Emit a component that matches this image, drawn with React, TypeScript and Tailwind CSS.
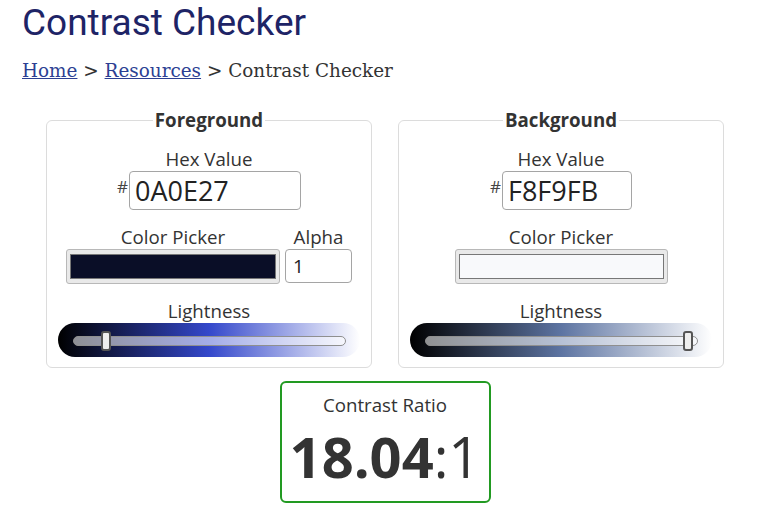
import React from "react";

const label = "text-[18.7px] leading-[24px] text-[#333]";

function Slider({ gradient, thumbLeft }: { gradient: string; thumbLeft: string }) {
  return (
    <div className={`relative w-[302px] h-[34px] rounded-full ${gradient}`}>
      <div className="absolute left-[15px] right-[14px] top-[13px] h-[10px] rounded-full bg-white/55 border border-[#8f8f8f]" />
      <div className={`absolute top-[8px] ${thumbLeft} w-[10px] h-[20px] rounded-[3px] bg-[#eeeeee] border-2 border-[#555]`} />
    </div>
  );
}

function HexInput({ value, width }: { value: string; width: string }) {
  return (
    <div className="flex items-start">
      <span className="text-[17px] leading-none mt-[7px] mr-[1px] text-[#444]">#</span>
      <div className={`${width} h-[39px] border border-[#a5a5a5] rounded-[4px] pl-[5px] text-[27px] leading-[37px] text-[#222]`}>
        {value}
      </div>
    </div>
  );
}

function Picker({ color, width }: { color: string; width: string }) {
  return (
    <div className={`${width} h-[35px] rounded-[3px] border border-[#b8b8b8] bg-[#e9e9e9] px-[3px] py-[4px]`}>
      <div className={`h-full border border-[#777] ${color}`} />
    </div>
  );
}

export default function App() {
  return (
    <div className="min-h-[516px] bg-white pl-[22px] font-['Open_Sans',sans-serif]">
      <h1 className="font-['Roboto',sans-serif] text-[37px] leading-[46px] text-[#1e2466]">Contrast Checker</h1>
      <nav className="mt-[13px] font-['DejaVu_Serif',serif] text-[18.4px] leading-[24px] text-[#333]">
        <a className="text-[#2c3f93] underline">Home</a> &gt;{" "}
        <a className="text-[#2c3f93] underline">Resources</a> &gt; Contrast Checker
      </nav>

      <div className="w-[678px] ml-[24px] mt-[25px]">
        <div className="flex gap-[26px]">
          <fieldset className="w-[326px] border border-[#dcdcdc] rounded-[6px] pb-[10px]">
            <legend className="mx-auto px-[2px] text-[18.7px] font-bold leading-[24px] text-[#333]">Foreground</legend>
            <div className="flex flex-col items-center pt-[15px]">
              <span className={label}>Hex Value</span>
              <HexInput value="0A0E27" width="w-[172px]" />
              <div className="flex gap-[5px] mt-[15px]">
                <div className="flex flex-col items-center">
                  <span className={label}>Color Picker</span>
                  <Picker color="bg-[#0a0e27]" width="w-[214px]" />
                </div>
                <div className="flex flex-col items-center">
                  <span className={label}>Alpha</span>
                  <div className="w-[67px] h-[34px] border border-[#a5a5a5] rounded-[4px] pl-[7px] text-[19px] leading-[32px] text-[#222]">1</div>
                </div>
              </div>
              <span className={`${label} mt-[15px]`}>Lightness</span>
              <Slider gradient="bg-[linear-gradient(to_right,#000,#3448cb,#fff)]" thumbLeft="left-[43px]" />
            </div>
          </fieldset>

          <fieldset className="w-[326px] border border-[#dcdcdc] rounded-[6px] pb-[10px]">
            <legend className="mx-auto px-[2px] text-[18.7px] font-bold leading-[24px] text-[#333]">Background</legend>
            <div className="flex flex-col items-center pt-[15px]">
              <span className={label}>Hex Value</span>
              <HexInput value="F8F9FB" width="w-[130px]" />
              <div className="flex flex-col items-center mt-[15px]">
                <span className={label}>Color Picker</span>
                <Picker color="bg-[#f8f9fb]" width="w-[213px]" />
              </div>
              <span className={`${label} mt-[15px]`}>Lightness</span>
              <Slider gradient="bg-[linear-gradient(to_right,#000,#5d74a2,#fff)]" thumbLeft="left-[273px]" />
            </div>
          </fieldset>
        </div>

        <div className="mt-[13px] mx-auto w-[211px] h-[122px] border-2 border-[#229a22] rounded-[6px] flex flex-col items-center pt-[10px]">
          <span className={label}>Contrast Ratio</span>
          <div className="mt-[9px] text-[56px] leading-[60px] text-[#333]">
            <span className="font-bold">18.04</span>:1
          </div>
        </div>
      </div>
    </div>
  );
}
